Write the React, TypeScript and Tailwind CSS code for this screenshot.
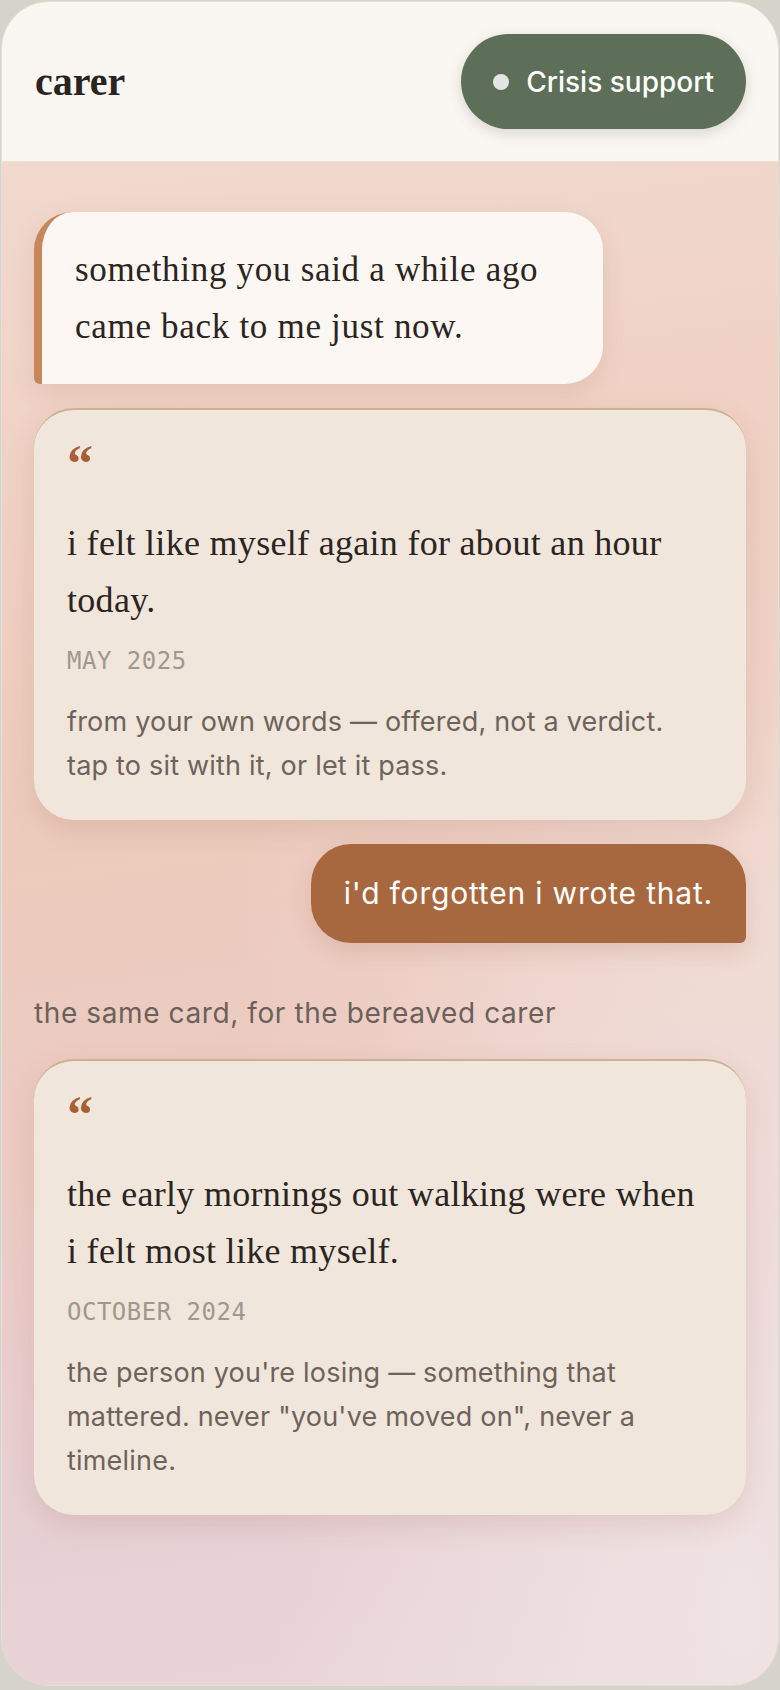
const serif = "font-['Liberation_Serif',serif]"
const sans = "font-['Inter',sans-serif]"
const mono = "font-['DejaVu_Sans_Mono',monospace]"

type Memory = { quote: string; date: string; note: string }

const memories: Memory[] = [
  {
    quote: 'i felt like myself again for about an hour today.',
    date: 'May 2025',
    note: 'from your own words — offered, not a verdict. tap to sit with it, or let it pass.',
  },
  {
    quote: 'the early mornings out walking were when i felt most like myself.',
    date: 'October 2024',
    note: 'the person you\'re losing — something that mattered. never "you\'ve moved on", never a timeline.',
  },
]

function MemoryCard({ memory }: { memory: Memory }) {
  return (
    <div className="rounded-[40px] border-t-2 border-[#cdb18f] bg-[#f0e6dc] px-[33px] pt-[28px] pb-[32px] shadow-[0_10px_28px_rgba(150,90,70,0.16)]">
      <div className={`${serif} h-[59px] text-[52px] font-bold leading-none text-[#a95f36]`}>“</div>
      <p className={`${serif} mt-[18px] pr-[16px] text-[36px] leading-[57px] tracking-[0.3px] text-[#2b2420]`}>
        {memory.quote}
      </p>
      <p className={`${mono} mt-[14px] text-[24px] leading-[36px] tracking-[0.5px] text-[#a3968c] uppercase`}>
        {memory.date}
      </p>
      <p className={`${sans} mt-[21px] pr-[8px] text-[27px] leading-[44px] tracking-[0.2px] text-[#6f625a]`}>
        {memory.note}
      </p>
    </div>
  )
}

export default function App() {
  return (
    <div className="min-h-screen bg-[#d6d3ca] px-[1px] pt-[1px] pb-[4px]">
      <div className="flex h-[1685px] flex-col overflow-hidden rounded-[48px] border border-[#e4e0d8]">
        <header className="flex h-[160px] shrink-0 items-center justify-between border-b border-[#ebe1d8] bg-[#faf6f1] pl-[33px] pr-[32px]">
          <h1 className={`${serif} text-[40px] font-bold leading-none text-[#2a2420]`}>carer</h1>
          <button className="flex h-[95px] items-center gap-[17px] rounded-full bg-[#5d6f59] px-[32px] shadow-[0_4px_14px_rgba(60,70,55,0.18)]">
            <span className="size-4 rounded-full bg-[#e3e6e2]" />
            <span className={`${sans} text-[28px] font-medium text-white`}>Crisis support</span>
          </button>
        </header>

        <main className="flex flex-1 flex-col gap-[24px] bg-[radial-gradient(ellipse_at_95%_95%,#f0e3e3_0%,transparent_45%),radial-gradient(ellipse_at_100%_50%,#f1d8cf_0%,transparent_50%),linear-gradient(172deg,#f1d9ce_0%,#edcbbb_40%,#ebcbc4_62%,#e7d0d4_85%,#e9d7da_100%)] px-[32px] pt-[50px]">
          <div
            className={`${serif} w-[569px] rounded-[38px] rounded-bl-[6px] border-l-[8px] border-[#c8875a] bg-[#fcf7f3] py-[29px] pl-[33px] pr-[20px] text-[35px] leading-[57px] tracking-[0.7px] text-[#2b2420] shadow-[0_8px_24px_rgba(150,90,70,0.14)]`}
          >
            something you said a while ago
            <br />
            came back to me just now.
          </div>

          <MemoryCard memory={memories[0]} />

          <div
            className={`${sans} self-end rounded-[40px] rounded-br-[6px] bg-[#a8683f] px-[33px] py-[29px] text-[30px] leading-[41px] tracking-[0.8px] text-white shadow-[0_8px_22px_rgba(150,90,60,0.18)]`}
          >
            i'd forgotten i wrote that.
          </div>

          <p className={`${sans} mt-[28px] mb-[4px] text-[28px] leading-[36px] tracking-[0.6px] text-[#6b615a]`}>
            the same card, for the bereaved carer
          </p>

          <MemoryCard memory={memories[1]} />
        </main>
      </div>
    </div>
  )
}
